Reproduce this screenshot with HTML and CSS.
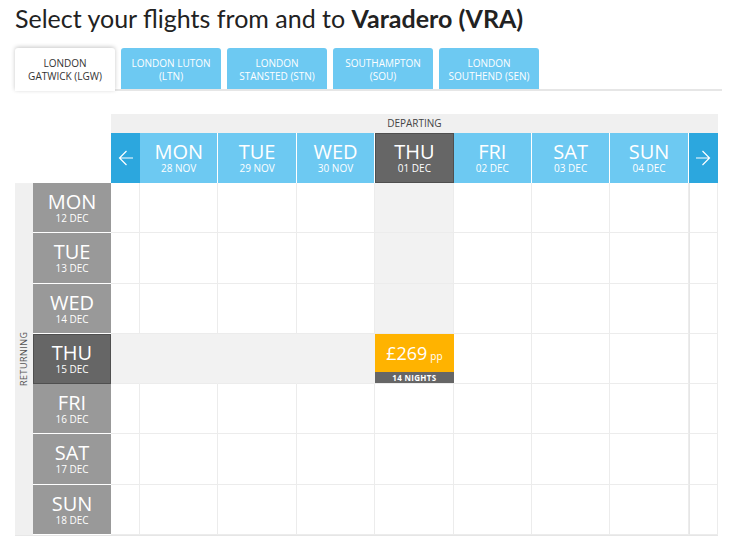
FILE: index.html
```html
<!DOCTYPE html>
<html lang="en">
<head>
  <meta charset="UTF-8">
  <meta name="viewport" content="width=device-width, initial-scale=1.0">
  <title>Select your flights</title>
  <link rel="stylesheet" href="styles.css">
</head>
<body>
  <h1 class="title">Select your flights from and to <b>Varadero (VRA)</b></h1>

  <div class="tabs">
    <div class="tab active">LONDON<br>GATWICK (LGW)</div>
    <div class="tab">LONDON LUTON<br>(LTN)</div>
    <div class="tab">LONDON<br>STANSTED (STN)</div>
    <div class="tab">SOUTHAMPTON<br>(SOU)</div>
    <div class="tab">LONDON<br>SOUTHEND (SEN)</div>
  </div>

  <div class="calendar">
    <div class="returning">RETURNING</div>

    <div class="blank"></div>
    <div class="departing">DEPARTING</div>

    <div class="blank"></div>
    <div class="arrow">
      <svg width="16" height="16" viewBox="0 0 16 16"><path d="M15 8H1.5M8.5 1L1.5 8l7 7" /></svg>
    </div>
    <div class="day"><span class="name">MON</span><span class="date">28 NOV</span></div>
    <div class="day"><span class="name">TUE</span><span class="date">29 NOV</span></div>
    <div class="day"><span class="name">WED</span><span class="date">30 NOV</span></div>
    <div class="day sel"><span class="name">THU</span><span class="date">01 DEC</span></div>
    <div class="day"><span class="name">FRI</span><span class="date">02 DEC</span></div>
    <div class="day"><span class="name">SAT</span><span class="date">03 DEC</span></div>
    <div class="day"><span class="name">SUN</span><span class="date">04 DEC</span></div>
    <div class="arrow">
      <svg width="16" height="16" viewBox="0 0 16 16"><path d="M1 8h13.5M7.5 1l7 7-7 7" /></svg>
    </div>

    <!-- MON -->
    <div class="rday"><span class="name">MON</span><span class="date">12 DEC</span></div>
    <div class="cell"></div>
    <div class="cell"></div><div class="cell"></div><div class="cell"></div>
    <div class="cell hl"></div>
    <div class="cell"></div><div class="cell"></div><div class="cell"></div>
    <div class="cell end"></div>

    <!-- TUE -->
    <div class="rday"><span class="name">TUE</span><span class="date">13 DEC</span></div>
    <div class="cell"></div>
    <div class="cell"></div><div class="cell"></div><div class="cell"></div>
    <div class="cell hl"></div>
    <div class="cell"></div><div class="cell"></div><div class="cell"></div>
    <div class="cell end"></div>

    <!-- WED -->
    <div class="rday"><span class="name">WED</span><span class="date">14 DEC</span></div>
    <div class="cell"></div>
    <div class="cell"></div><div class="cell"></div><div class="cell"></div>
    <div class="cell hl"></div>
    <div class="cell"></div><div class="cell"></div><div class="cell"></div>
    <div class="cell end"></div>

    <!-- THU -->
    <div class="rday sel"><span class="name">THU</span><span class="date">15 DEC</span></div>
    <div class="cell hl flat"></div>
    <div class="cell hl flat"></div><div class="cell hl flat"></div><div class="cell hl flat"></div>
    <div class="price">
      <div class="amount">£269<small>pp</small></div>
      <div class="nights">14 NIGHTS</div>
    </div>
    <div class="cell"></div><div class="cell"></div><div class="cell"></div>
    <div class="cell end"></div>

    <!-- FRI -->
    <div class="rday"><span class="name">FRI</span><span class="date">16 DEC</span></div>
    <div class="cell"></div>
    <div class="cell"></div><div class="cell"></div><div class="cell"></div>
    <div class="cell"></div>
    <div class="cell"></div><div class="cell"></div><div class="cell"></div>
    <div class="cell end"></div>

    <!-- SAT -->
    <div class="rday"><span class="name">SAT</span><span class="date">17 DEC</span></div>
    <div class="cell"></div>
    <div class="cell"></div><div class="cell"></div><div class="cell"></div>
    <div class="cell"></div>
    <div class="cell"></div><div class="cell"></div><div class="cell"></div>
    <div class="cell end"></div>

    <!-- SUN -->
    <div class="rday"><span class="name">SUN</span><span class="date">18 DEC</span></div>
    <div class="cell"></div>
    <div class="cell"></div><div class="cell"></div><div class="cell"></div>
    <div class="cell"></div>
    <div class="cell"></div><div class="cell"></div><div class="cell"></div>
    <div class="cell end"></div>
  </div>
</body>
</html>
```
FILE: styles.css
```css
body {
  margin: 0;
  padding: 0 15px;
  font-family: "Open Sans", "Liberation Sans", sans-serif;
  color: #333;
  background: #fff;
}
.title {
  margin: 0;
  padding-top: 3px;
  font-family: Lato, "Open Sans", sans-serif;
  font-weight: 400;
  font-size: 25px;
  line-height: 30px;
  color: #222;
}
.title b {
  font-weight: 700;
}

.tabs {
  display: flex;
  align-items: flex-start;
  gap: 6px;
  margin-top: 15px;
  width: 707px;
  height: 41px;
  border-bottom: 2px solid #e6e6e6;
}
.tab {
  box-sizing: border-box;
  width: 100px;
  height: 41px;
  padding-top: 9px;
  background: #6dc9f2;
  color: #fff;
  font-size: 10px;
  line-height: 13px;
  text-align: center;
  border-radius: 3px 3px 0 0;
}
.tab.active {
  height: 43px;
  background: #fff;
  color: #333;
  box-shadow: 0 -1px 4px rgba(0, 0, 0, .22);
}

.calendar {
  display: grid;
  grid-template-columns: 18px 78px 29px repeat(7, 78.4px) 29px;
  grid-template-rows: 19px 50px repeat(7, 50.3px);
  width: 703px;
  margin-top: 23px;
  border-bottom: 1px solid #e6e6e6;
}
.blank {
  grid-column: span 2;
}
.departing {
  grid-column: span 9;
  background: #f0f0f0;
  color: #444;
  font-size: 10px;
  line-height: 19px;
  text-align: center;
}
.returning {
  grid-column: 1;
  grid-row: 3 / span 7;
  background: #f0f0f0;
  color: #555;
  font-size: 9px;
  letter-spacing: .5px;
  writing-mode: vertical-rl;
  transform: rotate(180deg);
  text-align: center;
  line-height: 18px;
}
.arrow {
  display: flex;
  align-items: center;
  justify-content: center;
  background: #2ca7de;
}
.arrow path {
  fill: none;
  stroke: #fff;
  stroke-width: 1.2;
}

.day,
.rday {
  box-sizing: border-box;
  display: flex;
  flex-direction: column;
  align-items: center;
  padding-top: 8px;
  color: #fff;
}
.day {
  background: #6dc9f2;
  border-right: 1px solid #fff;
}
.rday {
  background: #999;
  border-bottom: 1px solid #fff;
}
.day.sel,
.rday.sel {
  background: #666;
  border: 1px solid #4f4f4f;
  padding-top: 7px;
}
.name {
  font-size: 20px;
  line-height: 21px;
}
.date {
  font-size: 10px;
  line-height: 12px;
}

.cell {
  box-sizing: border-box;
  border-right: 1px solid #ececec;
  border-bottom: 1px solid #ececec;
}
.cell.hl {
  background: #f2f2f2;
}
.cell.flat {
  border-right-color: #f2f2f2;
}
.cell.end {
  border-left: 1px solid #e6e6e6;
}

.price {
  display: flex;
  flex-direction: column;
  background: #ffb300;
  border-bottom: 1px solid #ececec;
}
.amount {
  flex: 1;
  display: flex;
  align-items: center;
  justify-content: center;
  color: #fff;
  font-size: 18px;
}
.amount small {
  margin: 5px 0 0 3px;
  font-size: 10px;
}
.nights {
  background: #666;
  color: #fff;
  font-size: 8px;
  font-weight: 700;
  line-height: 11px;
  text-align: center;
  letter-spacing: .3px;
}
```
